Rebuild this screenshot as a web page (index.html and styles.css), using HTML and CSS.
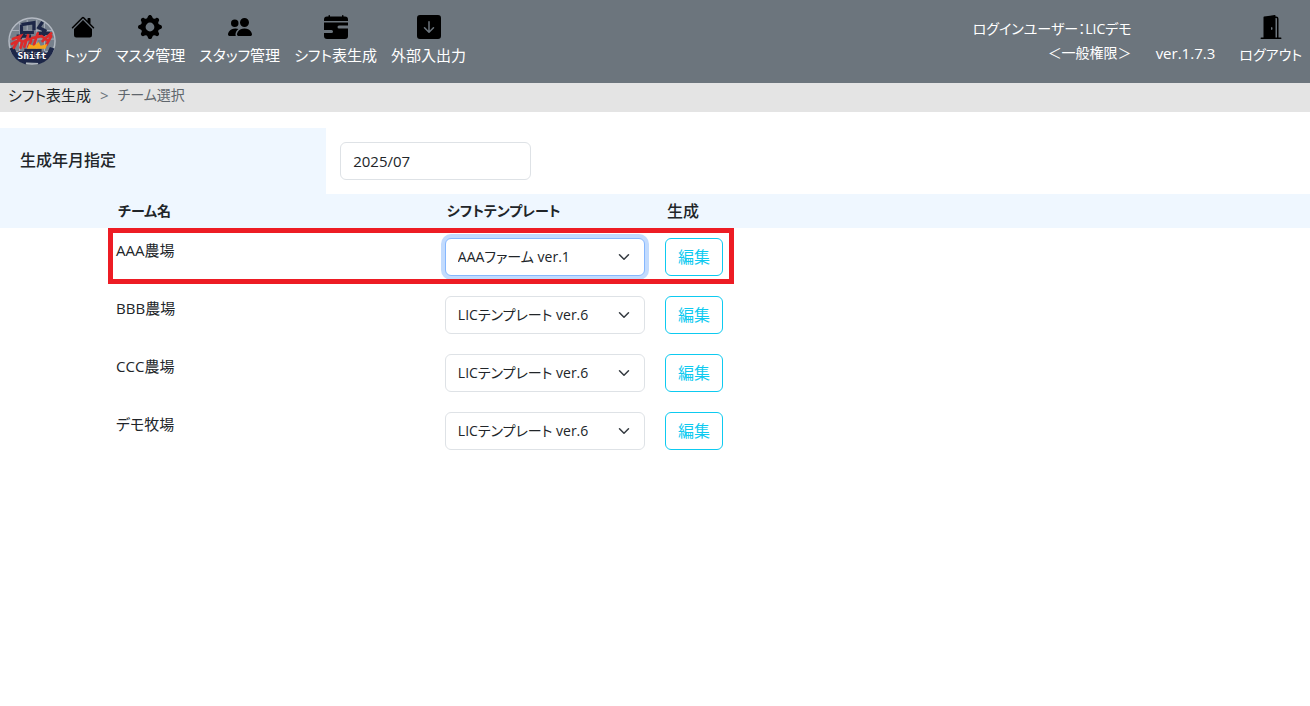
FILE: index.html
```html
<!DOCTYPE html>
<html lang="ja">
<head>
<meta charset="utf-8">
<meta name="viewport" content="width=device-width, initial-scale=1">
<title>シフト表生成</title>
<link rel="stylesheet" href="styles.css">
</head>
<body>
<header class="header">
  <a class="brand" href="#" aria-label="Shift">
    <svg class="brand-logo" viewBox="0 0 50 50">
      <circle cx="25" cy="25" r="24" fill="#76808c" stroke="#b4bac3" stroke-width="1.5"/>
      <g fill="none" stroke="#a9b0bb" stroke-width="1">
        <path d="M12 6v38M20 3v44M30 3v44M38 6v38M4 14h42M2 23h46M4 36h42"/>
      </g>
      <g fill="none" stroke="#1d2748" stroke-width="3.4">
        <path d="M14 8l13-2v8M14 8v8h13M9 20h15M17 16l-5 7M36 5l-4 6 8 4M31 17h13M37 12v8"/>
        <path d="M4 32q4 12 15 15M46 32q-4 12-15 15" stroke-width="5"/>
        <path d="M17 35h18M25 35v12M17 45l16 1" stroke-width="4"/>
      </g>
      <g fill="none" stroke="#dc2b2b" stroke-width="2.8" stroke-linecap="round">
        <path d="M5 23l8-3-7 12M4 28q9-6 11-2l-2 6M21 19l-4 12M17 25q7-4 7 0l-3 6M31 17l-4 12M25 22l9-2M36 25l9-8M35 20l7 5M45 20l-5 9"/>
      </g>
      <path d="M20 33l2-5 5 2 5-4 2 4 7-2-2 5z" fill="#f6a51c"/>
      <text class="brand-text" x="25" y="44" text-anchor="middle">Shift</text>
    </svg>
  </a>
  <nav class="nav">
    <a class="nav-item" href="#">
      <svg class="icon" viewBox="0 0 16 16"><path d="M8.707 1.5a1 1 0 0 0-1.414 0L.646 8.146a.5.5 0 0 0 .708.708L8 2.207l6.646 6.647a.5.5 0 0 0 .708-.708L13 5.793V2.5a.5.5 0 0 0-.5-.5h-1a.5.5 0 0 0-.5.5v1.293z"/><path d="m8 3.293 6 6V13.5a1.5 1.5 0 0 1-1.5 1.5h-9A1.5 1.5 0 0 1 2 13.5V9.293z"/></svg>
      <span>トップ</span>
    </a>
    <a class="nav-item" href="#">
      <svg class="icon" viewBox="0 0 16 16"><path d="M9.405 1.05c-.413-1.4-2.397-1.4-2.81 0l-.1.34a1.464 1.464 0 0 1-2.105.872l-.31-.17c-1.283-.698-2.686.705-1.987 1.987l.169.311c.446.82.023 1.841-.872 2.105l-.34.1c-1.4.413-1.4 2.397 0 2.81l.34.1a1.464 1.464 0 0 1 .872 2.105l-.17.31c-.698 1.283.705 2.686 1.987 1.987l.311-.169a1.464 1.464 0 0 1 2.105.872l.1.34c.413 1.4 2.397 1.4 2.81 0l.1-.34a1.464 1.464 0 0 1 2.105-.872l.31.17c1.283.698 2.686-.705 1.987-1.987l-.169-.311a1.464 1.464 0 0 1 .872-2.105l.34-.1c1.4-.413 1.4-2.397 0-2.81l-.34-.1a1.464 1.464 0 0 1-.872-2.105l.17-.31c.698-1.283-.705-2.686-1.987-1.987l-.311.169a1.464 1.464 0 0 1-2.105-.872zM8 10.93a2.929 2.929 0 1 1 0-5.86 2.929 2.929 0 0 1 0 5.858z"/></svg>
      <span>マスタ管理</span>
    </a>
    <a class="nav-item" href="#">
      <svg class="icon" viewBox="0 0 16 16"><path d="M7 14s-1 0-1-1 1-4 5-4 5 3 5 4-1 1-1 1zm4-6a3 3 0 1 0 0-6 3 3 0 0 0 0 6m-5.784 6A2.24 2.24 0 0 1 5 13c0-1.355.68-2.75 1.936-3.72A6.3 6.3 0 0 0 5 9c-4 0-5 3-5 4s1 1 1 1zM4.5 8a2.5 2.5 0 1 0 0-5 2.5 2.5 0 0 0 0 5"/></svg>
      <span>スタッフ管理</span>
    </a>
    <a class="nav-item" href="#">
      <svg class="icon" viewBox="0 0 16 16"><path d="M4 .5a.5.5 0 0 0-1 0V1H2a2 2 0 0 0-2 2v1h16V3a2 2 0 0 0-2-2h-1V.5a.5.5 0 0 0-1 0V1H4zM16 7V5H0v5h5a1 1 0 1 1 0 2H0v2a2 2 0 0 0 2 2h12a2 2 0 0 0 2-2V9h-6a1 1 0 1 1 0-2z"/></svg>
      <span>シフト表生成</span>
    </a>
    <a class="nav-item" href="#">
      <svg class="icon" viewBox="0 0 16 16"><path d="M2 0a2 2 0 0 0-2 2v12a2 2 0 0 0 2 2h12a2 2 0 0 0 2-2V2a2 2 0 0 0-2-2zm6.5 4.5v5.793l2.146-2.147a.5.5 0 0 1 .708.708l-3 3a.5.5 0 0 1-.708 0l-3-3a.5.5 0 1 1 .708-.708L7.5 10.293V4.5a.5.5 0 0 1 1 0"/></svg>
      <span>外部入出力</span>
    </a>
  </nav>
  <div class="account">
    <p class="user">ログインユーザー：LICデモ<br>＜一般権限＞</p>
    <span class="version">ver.1.7.3</span>
    <a class="nav-item logout" href="#">
      <svg class="icon" viewBox="0 0 16 16"><path d="M1.5 15a.5.5 0 0 0 0 1h13a.5.5 0 0 0 0-1H13V2.5A1.5 1.5 0 0 0 11.5 1H11V.5a.5.5 0 0 0-.57-.495l-7 1A.5.5 0 0 0 3 1.5V15zM11 2h.5a.5.5 0 0 1 .5.5V15h-1zm-2.5 8c-.276 0-.5-.448-.5-1s.224-1 .5-1 .5.448.5 1-.224 1-.5 1"/></svg>
      <span>ログアウト</span>
    </a>
  </div>
</header>
<nav class="breadcrumb" aria-label="パンくず">
  <a class="crumb" href="#">シフト表生成</a>
  <span class="crumb-sep">&gt;</span>
  <span class="crumb-current">チーム選択</span>
</nav>
<main>
  <div class="month">
    <label class="month-label" for="month">生成年月指定</label>
    <div class="month-field"><input class="control month-input" id="month" type="text" value="2025/07"></div>
  </div>
  <table class="teams">
    <colgroup><col class="col-space"><col class="col-name"><col class="col-template"><col></colgroup>
    <thead>
      <tr><td></td><th scope="col">チーム名</th><th scope="col">シフトテンプレート</th><th class="action-head" scope="col">生成</th></tr>
    </thead>
    <tbody>
      <tr>
        <td></td>
        <td class="name"><span class="highlight"></span><label for="t1">AAA農場</label></td>
        <td><div class="select-box"><select class="control select active" id="t1"><option>AAAファーム ver.1</option></select><svg class="chevron" viewBox="0 0 16 16"><path d="m2 5 6 6 6-6"/></svg></div></td>
        <td><button class="edit" type="button">編集</button></td>
      </tr>
      <tr>
        <td></td>
        <td class="name"><label for="t2">BBB農場</label></td>
        <td><div class="select-box"><select class="control select" id="t2"><option>LICテンプレート ver.6</option></select><svg class="chevron" viewBox="0 0 16 16"><path d="m2 5 6 6 6-6"/></svg></div></td>
        <td><button class="edit" type="button">編集</button></td>
      </tr>
      <tr>
        <td></td>
        <td class="name"><label for="t3">CCC農場</label></td>
        <td><div class="select-box"><select class="control select" id="t3"><option>LICテンプレート ver.6</option></select><svg class="chevron" viewBox="0 0 16 16"><path d="m2 5 6 6 6-6"/></svg></div></td>
        <td><button class="edit" type="button">編集</button></td>
      </tr>
      <tr>
        <td></td>
        <td class="name"><label for="t4">デモ牧場</label></td>
        <td><div class="select-box"><select class="control select" id="t4"><option>LICテンプレート ver.6</option></select><svg class="chevron" viewBox="0 0 16 16"><path d="m2 5 6 6 6-6"/></svg></div></td>
        <td><button class="edit" type="button">編集</button></td>
      </tr>
    </tbody>
  </table>
</main>
</body>
</html>
```

FILE: styles.css
```css
* {
  box-sizing: border-box;
}

body {
  margin: 0;
  background: #fff;
  color: #212529;
  font-family: "Open Sans", "Noto Sans CJK JP", sans-serif;
  font-size: 15px;
  line-height: 24px;
  font-feature-settings: "palt";
}

a {
  color: inherit;
  text-decoration: none;
}

.header {
  display: flex;
  align-items: flex-start;
  gap: 8px;
  padding: 15px 8px 16px;
  background: #6c757d;
  color: #fff;
  white-space: nowrap;
}

.brand-logo {
  display: block;
  width: 48px;
  height: 52px;
}

.brand-text {
  fill: #fff;
  stroke: #1d2748;
  stroke-width: 2px;
  paint-order: stroke;
  font-family: "DejaVu Sans Mono", monospace;
  font-size: 10px;
  font-weight: bold;
}

.nav {
  display: flex;
  gap: 14px;
}

.nav-item {
  display: flex;
  flex-direction: column;
  align-items: center;
  gap: 4px;
}

.icon {
  width: 24px;
  height: 24px;
  fill: #000;
}

.account {
  display: flex;
  align-items: flex-start;
  gap: 24px;
  margin-left: auto;
}

.user {
  margin: 2px 0 0;
  text-align: right;
  font-size: 14px;
}

.logout {
  font-size: 14px;
}

.version {
  padding-top: 26px;
}

.breadcrumb {
  display: flex;
  gap: 9px;
  padding: 0 8px 5px;
  background: #e4e4e4;
}

.crumb-sep {
  color: #6c757d;
}

.crumb-current {
  color: #5f666c;
  font-size: 14px;
}

.month {
  display: flex;
  margin-top: 16px;
}

.month-label {
  width: 24.9%;
  padding: 20px;
  background: #eff7ff;
  font-size: 16px;
  font-weight: 500;
}

.month-field {
  padding: 14px;
}

.control {
  height: 38px;
  padding: 0 12px;
  border: 1px solid #dee2e6;
  border-radius: 6px;
  background: #fff;
  color: #212529;
  font: inherit;
  font-feature-settings: inherit;
}

.month-input {
  width: 191px;
}

.teams {
  width: 100%;
  border-collapse: collapse;
  table-layout: fixed;
}

.col-space {
  width: 8.25%;
}

.col-name {
  width: 25.1%;
}

.col-template {
  width: 16.8%;
}

.teams thead {
  background: #eff7ff;
}

.teams th {
  padding: 5px 10px;
  text-align: left;
  font-size: 14px;
  font-weight: 600;
}

.teams .action-head {
  font-size: 16px;
  font-weight: 500;
}

.teams td {
  padding: 0 8px;
}

.teams tbody td {
  padding: 10px 8px;
  vertical-align: top;
}

.teams .name {
  position: relative;
}

.highlight {
  position: absolute;
  top: 0;
  left: 0;
  width: 626px;
  height: 56px;
  border: 5px solid #ed1c24;
  pointer-events: none;
}

.select-box {
  display: grid;
  max-width: 200px;
  align-items: center;
}

.select {
  grid-area: 1 / 1;
  width: 100%;
  appearance: none;
  font-size: 14px;
}

.select.active {
  border-color: #86b7fe;
  box-shadow: 0 0 0 4px #c2dbfe;
}

.chevron {
  grid-area: 1 / 1;
  justify-self: end;
  width: 12px;
  height: 12px;
  margin-right: 15px;
  fill: none;
  stroke: #343a40;
  stroke-width: 2;
  stroke-linecap: round;
  stroke-linejoin: round;
  pointer-events: none;
}

.edit {
  display: block;
  width: 58px;
  height: 38px;
  padding: 0;
  border: 1px solid #0dcaf0;
  border-radius: 6px;
  background: #fff;
  color: #0dcaf0;
  font: inherit;
  font-size: 16px;
}
```
